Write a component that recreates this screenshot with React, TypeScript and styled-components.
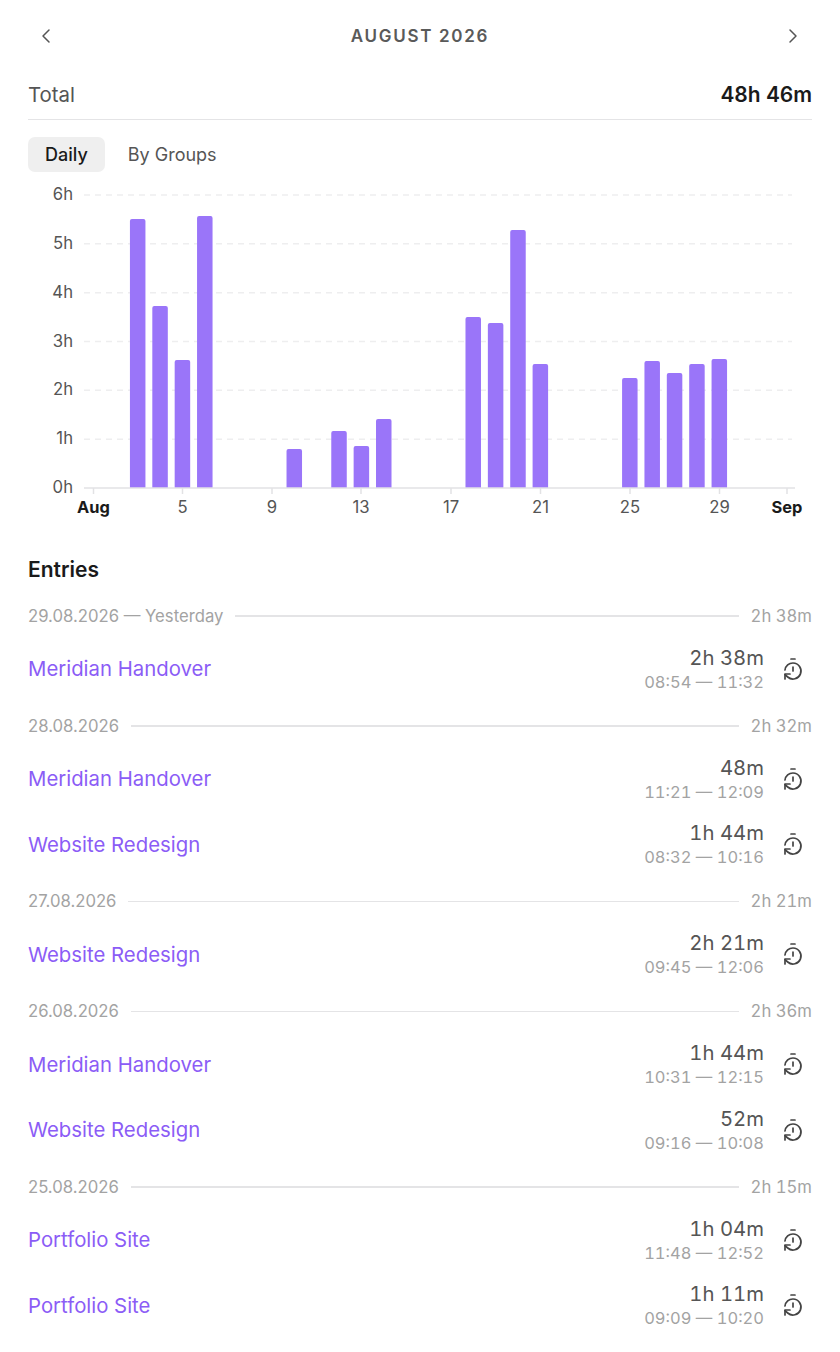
import * as React from 'react';
import styled, { createGlobalStyle } from 'styled-components';
import { ChevronLeft, ChevronRight, TimerReset } from 'lucide-react';

const GlobalStyle = createGlobalStyle`
  html, body {
    margin: 0;
    padding: 0;
    background: #fff;
    font-family: Inter, "Liberation Sans", sans-serif;
    -webkit-font-smoothing: antialiased;
  }
`;

const Page = styled.div`
  padding: 0 28px;
  height: 1352px;
  box-sizing: border-box;
  overflow: hidden;
`;

const MonthBar = styled.header`
  display: flex;
  align-items: center;
  justify-content: space-between;
  height: 72px;
  padding: 0 7px 0 6px;
  color: #555;
`;

const MonthTitle = styled.h1`
  margin: 0 0 0 1px;
  font-size: 17px;
  font-weight: 600;
  letter-spacing: 1.7px;
  color: #5a5a5a;
`;

const TotalRow = styled.div`
  display: flex;
  align-items: center;
  justify-content: space-between;
  height: 48px;
  padding-bottom: 3px;
  box-sizing: border-box;
  border-bottom: 1.5px solid #e4e4e6;
`;

const TotalLabel = styled.span`
  font-size: 20.4px;
  color: #555;
`;

const TotalValue = styled.span`
  font-size: 20.9px;
  font-weight: 600;
  font-variant-numeric: tabular-nums;
  color: #1a1a1a;
`;

const Tabs = styled.div`
  display: flex;
  gap: 6px;
  margin-top: 17px;
`;

const Tab = styled.div<{ $active?: boolean }>`
  display: flex;
  align-items: center;
  height: 35px;
  padding: 0 17px;
  border-radius: 7px;
  font-size: 18px;
  background: ${(p) => (p.$active ? '#efefef' : 'transparent')};
  color: ${(p) => (p.$active ? '#1a1a1a' : '#555')};
  font-weight: ${(p) => (p.$active ? 500 : 400)};
`;

const ChartSvg = styled.svg`
  display: block;
  margin: 8px 0 0 -28px;
`;

const EntriesTitle = styled.h2`
  margin: 31px 0 0;
  font-size: 21px;
  line-height: 28px;
  font-weight: 600;
  color: #1a1a1a;
`;

const GroupHead = styled.div`
  display: flex;
  align-items: center;
  gap: 12px;
  height: 24px;
  margin-bottom: 8px;
  font-size: 16.7px;
  color: #a3a3a3;
`;

const GroupTotal = styled.span`
  font-variant-numeric: tabular-nums;
`;

const GroupLine = styled.div`
  flex: 1;
  height: 1.5px;
  background: #e4e4e6;
`;

const EntryList = styled.div`
  margin-top: 20px;
`;

const Group = styled.section`
  margin-bottom: 12.3px;
`;

const Entry = styled.div`
  display: flex;
  align-items: center;
  height: 65.6px;
`;

const EntryName = styled.div`
  flex: 1;
  font-size: 20.35px;
  color: #8b5cf6;
`;

const EntryTimes = styled.div`
  display: flex;
  flex-direction: column;
  align-items: flex-end;
  margin-right: 17px;
  padding-top: 2px;
`;

const Duration = styled.div`
  font-size: 20.3px;
  line-height: 24px;
  font-variant-numeric: tabular-nums;
  color: #555;
`;

const Range = styled.div`
  margin-top: 1px;
  font-size: 16.5px;
  line-height: 23px;
  font-variant-numeric: tabular-nums;
  color: #a3a3a3;
`;

const TimerIcon = styled(TimerReset)`
  margin-right: 7px;
  color: #444;
`;

const BASE = 488;
const HOUR = 48.83;
const dayX = (d: number) => 93 + 22.37 * (d - 1);

const bars: [number, number][] = [
  [3, 219], [4, 306], [5, 360], [6, 216], [10, 449], [12, 431], [13, 446], [14, 419],
  [18, 317], [19, 323], [20, 230], [21, 364], [25, 378], [26, 361], [27, 373], [28, 364], [29, 359],
];

const ticks: [string, number, boolean][] = [
  ['Aug', 93.5, true], ['5', 182.5, false], ['9', 272, false], ['13', 361, false], ['17', 451, false],
  ['21', 540.5, false], ['25', 630, false], ['29', 719.5, false], ['Sep', 787, true],
];

const TOP = 180;

const Chart = () => (
  <ChartSvg width="840" height="345" viewBox={`0 ${TOP} 840 345`}>
    {[1, 2, 3, 4, 5, 6].map((h) => (
      <line key={h} x1="84" x2="792" y1={BASE - h * HOUR} y2={BASE - h * HOUR}
        stroke="#eeeeef" strokeWidth="1.5" strokeDasharray="6 5" />
    ))}
    {[0, 1, 2, 3, 4, 5, 6].map((h) => (
      <text key={h} x="73" y={BASE - h * HOUR + 5} textAnchor="end" fontFamily="Inter" fontSize="16.7" fill="#555">
        {h}h
      </text>
    ))}
    {bars.map(([d, top]) => {
      const x = dayX(d) - 7.8;
      return (
        <path key={d} fill="#9a75f9"
          d={`M${x} ${BASE}V${top + 2}a2 2 0 0 1 2-2h11.5a2 2 0 0 1 2 2V${BASE}z`} />
      );
    })}
    <line x1="84" x2="795" y1={BASE} y2={BASE} stroke="#e2e2e4" strokeWidth="1.5" />
    {ticks.map(([label, x, bold]) => (
      <g key={label}>
        <line x1={x} x2={x} y1={BASE} y2={BASE + 6} stroke="#e2e2e4" strokeWidth="1.5" />
        <text x={x} y={BASE + 25} textAnchor="middle" fontFamily="Inter" fontSize={bold ? 16.4 : 16.7}
          fontWeight={bold ? 700 : 400} fill={bold ? '#1a1a1a' : '#555'}>
          {label}
        </text>
      </g>
    ))}
  </ChartSvg>
);

const groups = [
  { date: '29.08.2026 — Yesterday', total: '2h 38m', rows: [['Meridian Handover', '2h 38m', '08:54 — 11:32']] },
  { date: '28.08.2026', total: '2h 32m', rows: [['Meridian Handover', '48m', '11:21 — 12:09'], ['Website Redesign', '1h 44m', '08:32 — 10:16']] },
  { date: '27.08.2026', total: '2h 21m', rows: [['Website Redesign', '2h 21m', '09:45 — 12:06']] },
  { date: '26.08.2026', total: '2h 36m', rows: [['Meridian Handover', '1h 44m', '10:31 — 12:15'], ['Website Redesign', '52m', '09:16 — 10:08']] },
  { date: '25.08.2026', total: '2h 15m', rows: [['Portfolio Site', '1h 04m', '11:48 — 12:52'], ['Portfolio Site', '1h 11m', '09:09 — 10:20']] },
];

export default function App() {
  return (
    <Page>
      <GlobalStyle />
      <MonthBar>
        <ChevronLeft size={24} strokeWidth={1.5} />
        <MonthTitle>AUGUST 2026</MonthTitle>
        <ChevronRight size={24} strokeWidth={1.5} />
      </MonthBar>
      <TotalRow>
        <TotalLabel>Total</TotalLabel>
        <TotalValue>48h 46m</TotalValue>
      </TotalRow>
      <Tabs>
        <Tab $active>Daily</Tab>
        <Tab>By Groups</Tab>
      </Tabs>
      <Chart />
      <EntriesTitle>Entries</EntriesTitle>
      <EntryList>
        {groups.map((g) => (
          <Group key={g.date}>
            <GroupHead>
              <span>{g.date}</span>
              <GroupLine />
              <GroupTotal>{g.total}</GroupTotal>
            </GroupHead>
            {g.rows.map(([name, dur, range]) => (
              <Entry key={range}>
                <EntryName>{name}</EntryName>
                <EntryTimes>
                  <Duration>{dur}</Duration>
                  <Range>{range}</Range>
                </EntryTimes>
                <TimerIcon size={24} strokeWidth={1.7} />
              </Entry>
            ))}
          </Group>
        ))}
      </EntryList>
    </Page>
  );
}
